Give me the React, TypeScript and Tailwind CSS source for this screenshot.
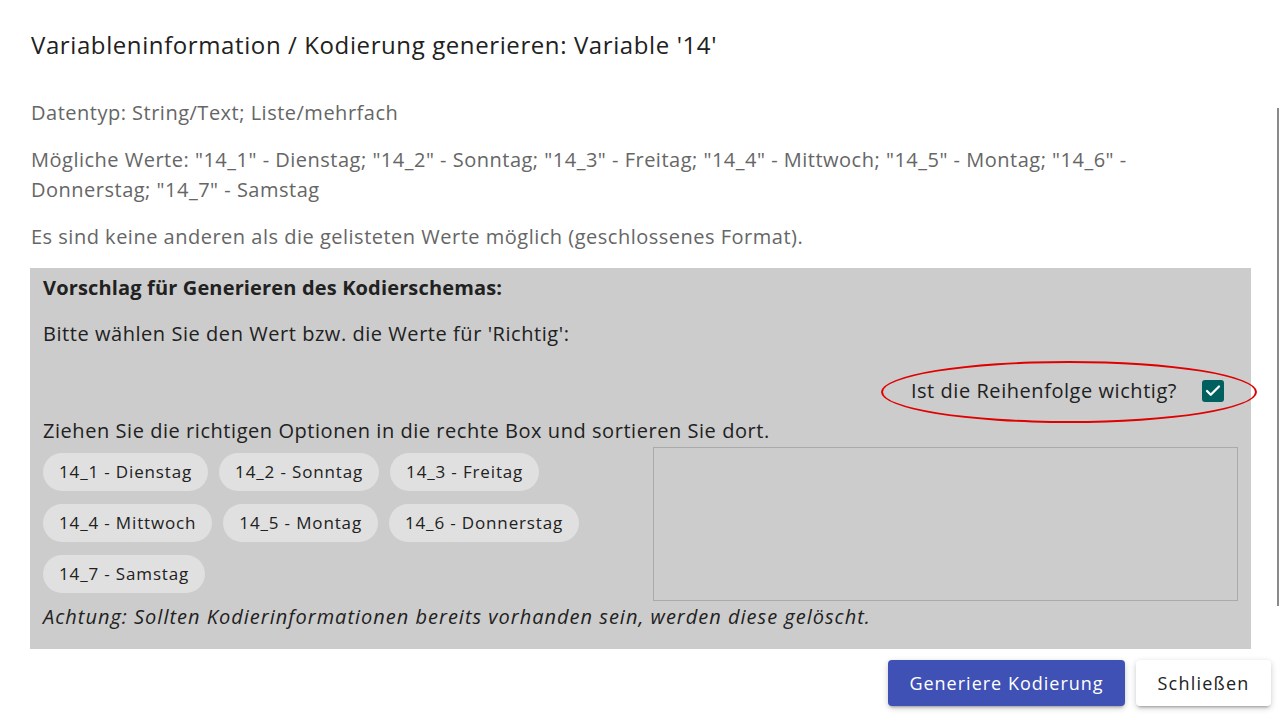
import { Check } from 'lucide-react';

const chips = [
  ['14_1 - Dienstag', '14_2 - Sonntag', '14_3 - Freitag'],
  ['14_4 - Mittwoch', '14_5 - Montag', '14_6 - Donnerstag'],
  ['14_7 - Samstag'],
];

export default function App() {
  return (
    <div className="relative w-[1280px] h-[720px] bg-white overflow-hidden font-['Open_Sans',sans-serif] text-[#212121]">
      {/* scrollbar */}
      <div className="absolute left-[1277px] top-[108px] w-[2px] h-[498px] bg-[#8a8a8a]" />

      <div className="pl-[31px] pr-[29px]">
        <h1 className="pt-[29px] text-[24px] leading-[32px] tracking-[0.6px]">
          Variableninformation / Kodierung generieren: Variable '14'
        </h1>

        <div className="mt-[37px] text-[20px] text-[#666] leading-[30px] tracking-[0.5px]">
          <p>Datentyp: String/Text; Liste/mehrfach</p>
          <p className="mt-[17px]">
            Mögliche Werte: "14_1" - Dienstag; "14_2" - Sonntag; "14_3" - Freitag; "14_4" - Mittwoch; "14_5" - Montag; "14_6" -
            Donnerstag; "14_7" - Samstag
          </p>
          <p className="mt-[17px]">Es sind keine anderen als die gelisteten Werte möglich (geschlossenes Format).</p>
        </div>
      </div>

      <div className="ml-[30px] mr-[29px] mt-[16px] h-[381px] bg-[#cccccc] px-[13px] pt-[5px] text-[20px] tracking-[0.55px]">
        <p className="font-bold leading-[30px] tracking-[0.15px]">Vorschlag für Generieren des Kodierschemas:</p>
        <p className="mt-[16px] leading-[30px]">Bitte wählen Sie den Wert bzw. die Werte für 'Richtig':</p>

        <div className="mt-[27px] flex justify-end items-center pr-[14px]">
          <div className="relative flex items-center">
            <div className="absolute right-[-33px] top-[-15px] w-[376px] h-[62px] rounded-[50%] border-2 border-[#e00000]" />
            <span className="leading-[30px]">Ist die Reihenfolge wichtig?</span>
            <span className="ml-[25px] w-[22px] h-[22px] rounded-[3px] bg-[#005f5f] flex items-center justify-center">
              <Check size={18} strokeWidth={3} className="text-white" />
            </span>
          </div>
        </div>

        <p className="mt-[10px] leading-[30px]">Ziehen Sie die richtigen Optionen in die rechte Box und sortieren Sie dort.</p>

        <div className="flex gap-[44px]">
          <div className="w-[566px] flex flex-col gap-[13px] pt-[7px]">
            {chips.map((row, i) => (
              <div key={i} className="flex gap-[11px]">
                {row.map((c) => (
                  <span key={c} className="h-[38px] px-[16px] rounded-full bg-[#e0e0e0] text-[17px] tracking-[0.85px] flex items-center">
                    {c}
                  </span>
                ))}
              </div>
            ))}
          </div>
          <div className="mt-[1px] w-[585px] h-[154px] border border-[#aaaaaa]" />
        </div>

        <p className="mt-[1px] italic leading-[30px] tracking-[1px]">
          Achtung: Sollten Kodierinformationen bereits vorhanden sein, werden diese gelöscht.
        </p>
      </div>

      <div className="mt-[11px] pr-[9px] flex justify-end gap-[11px]">
        <button className="h-[46px] w-[237px] rounded-[4px] bg-[#3f51b5] text-white text-[18px] tracking-[1px] shadow-[0_3px_3px_-2px_rgba(0,0,0,0.3),0_2px_6px_rgba(0,0,0,0.2)]">
          Generiere Kodierung
        </button>
        <button className="h-[46px] w-[135px] rounded-[4px] bg-white text-[#212121] text-[18px] tracking-[1.2px] shadow-[0_3px_3px_-2px_rgba(0,0,0,0.3),0_2px_6px_rgba(0,0,0,0.2)]">
          Schließen
        </button>
      </div>
    </div>
  );
}
